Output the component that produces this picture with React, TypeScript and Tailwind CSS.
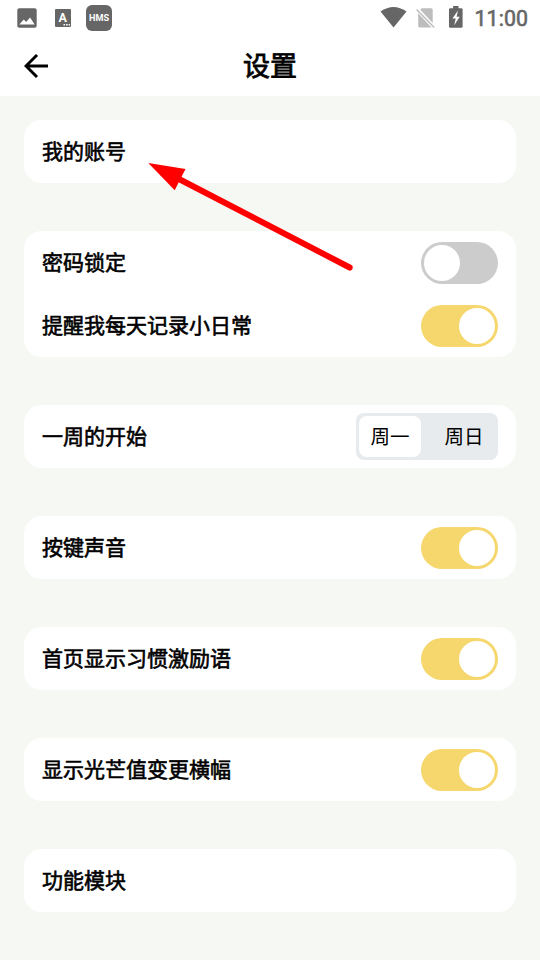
import type { ReactNode } from "react";

function Card({ children }: { children: ReactNode }) {
  return <section className="flex flex-col rounded-[18px] bg-white">{children}</section>;
}

function Row({ label, children }: { label: string; children?: ReactNode }) {
  return (
    <div className="flex h-[63px] items-center justify-between px-[18px]">
      <span className="pb-[3px] text-[21px] leading-[30px] [-webkit-text-stroke:0.6px_black]">{label}</span>
      {children}
    </div>
  );
}

function Toggle({ on = false }: { on?: boolean }) {
  return (
    <button
      role="switch"
      aria-checked={on}
      className={`flex h-[42px] w-[77px] items-center rounded-full px-[3px] ${on ? "justify-end bg-[#f5d76e]" : "justify-start bg-[#cccccc]"}`}
    >
      <span className="h-9 w-9 rounded-full bg-white" />
    </button>
  );
}

function StatusBar() {
  return (
    <div className="flex h-9 items-center justify-between text-[#666666]">
      <svg width="120" height="36" viewBox="0 0 120 36" fill="currentColor">
        <rect x="17.3" y="8.2" width="19.4" height="19.6" rx="2" />
        <path d="M19.3 24.5 23.8 19.6l2.3 2.4 4-4.6 4.5 7.1Z" fill="white" />
        <rect x="55" y="9" width="16" height="18" rx="1" />
        <text x="62.8" y="22.2" fontSize="12.5" fontWeight="700" textAnchor="middle" fill="white" className="font-['Roboto',sans-serif]">A</text>
        <path d="M63.5 24h1.6v1.6h-1.6zM66.1 24h1.6v1.6h-1.6zM68.7 24h1.3v1.6h-1.3z" fill="white" />
        <rect x="86" y="5" width="26" height="26" rx="6" />
        <text x="89" y="21.1" fontSize="8.6" fontWeight="700" textLength="20" lengthAdjust="spacingAndGlyphs" fill="white" className="font-['Roboto',sans-serif]">HMS</text>
      </svg>
      <svg width="168" height="36" viewBox="372 0 168 36" fill="currentColor">
        <path d="M380.5 11.6q13-9.2 26 0L393.5 27.6Z" />
        <path d="M418.2 13.2 431.5 27.4h-11.8q-1.5 0-1.5-1.5ZM420.3 9.8 421.8 8.2h9.4q1.5 0 1.5 1.5v13.2Z" fill="#bdbdbd" />
        <path d="m416.6 9.4 17.6 18" stroke="#bdbdbd" strokeWidth="1.5" />
        <path d="M450.3 8.2h2.8V6h5.4v2.2h2.8q1.3 0 1.3 1.3v17q0 1.3-1.3 1.3h-11q-1.3 0-1.3-1.3v-17q0-1.3 1.3-1.3Z" />
        <path d="m457.9 10.6-5.4 8h3.2l-1.5 6.6 5.5-8.5h-3.1Z" fill="white" />
        <text x="474.5" y="26.1" fontSize="21.3" fontWeight="400" textLength="53.5" stroke="currentColor" strokeWidth="0.6" className="font-['Roboto',sans-serif]">11:00</text>
      </svg>
    </div>
  );
}

export default function App() {
  return (
    <div className="relative flex h-[960px] w-[540px] flex-col overflow-hidden bg-[#f6f8f4] font-['Noto_Sans_CJK_SC',sans-serif] text-black">
      <header className="flex h-24 flex-col bg-white">
        <StatusBar />
        <div className="grid h-[60px] grid-cols-[72px_1fr_72px] items-center">
          <button aria-label="返回" className="pl-6">
            <svg width="25" height="24" viewBox="0 0 25 24" fill="none" stroke="black" strokeWidth="2.9">
              <path d="M24 12H2.5M13 1 2 12l11 11" />
            </svg>
          </button>
          <h1 className="pb-[3px] text-center text-[27px] leading-10 [-webkit-text-stroke:0.8px_black]">设置</h1>
        </div>
      </header>
      <main className="flex flex-col gap-12 px-6 pt-6">
        <Card><Row label="我的账号" /></Card>
        <Card>
          <Row label="密码锁定"><Toggle /></Row>
          <Row label="提醒我每天记录小日常"><Toggle on /></Row>
        </Card>
        <Card>
          <Row label="一周的开始">
            <div className="flex h-[47px] w-[142px] rounded-lg bg-[#e8ebee] p-[3px] text-[19.5px]">
              <button className="h-[41px] w-[62px] rounded-lg bg-white pb-[2px]">周一</button>
              <button className="h-[41px] flex-1 pb-[2px] pl-[12px]">周日</button>
            </div>
          </Row>
        </Card>
        <Card><Row label="按键声音"><Toggle on /></Row></Card>
        <Card><Row label="首页显示习惯激励语"><Toggle on /></Row></Card>
        <Card><Row label="显示光芒值变更横幅"><Toggle on /></Row></Card>
        <Card><Row label="功能模块" /></Card>
      </main>
      <svg className="pointer-events-none absolute top-[150px] left-[140px]" width="230" height="130" viewBox="140 150 230 130">
        <path d="M178 178.5 349.7 267.5" stroke="#ff0000" strokeWidth="6" strokeLinecap="round" />
        <path d="M148.3 163 185.5 169 174.7 190.2Z" fill="#ff0000" />
      </svg>
    </div>
  );
}
